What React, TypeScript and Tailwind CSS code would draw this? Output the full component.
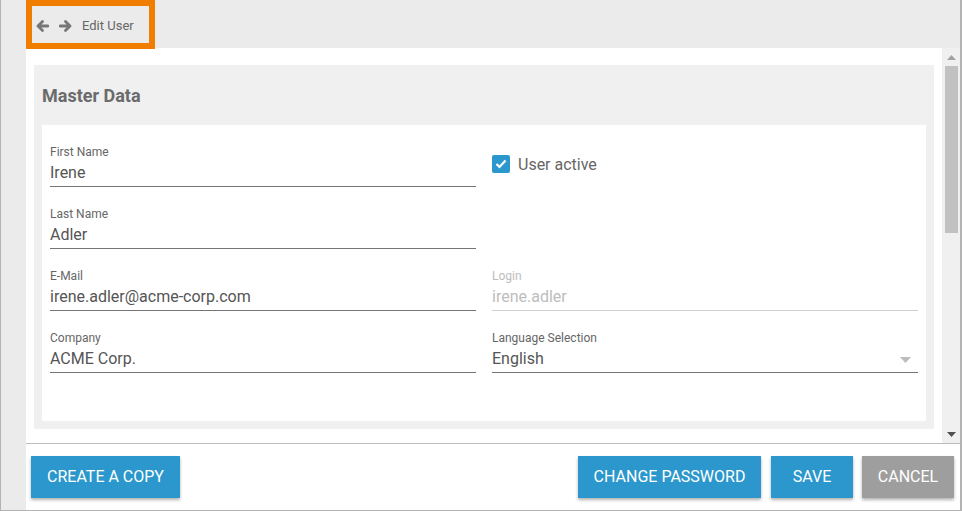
const Arrow = ({ right }: { right?: boolean }) => (
  <svg width="13" height="12" viewBox="0 0 13 12" className={right ? "scale-x-[-1]" : ""}>
    <path
      d="M12 6H2.5M6.5 1.5L2 6l4.5 4.5"
      stroke="#777"
      strokeWidth="2.8"
      fill="none"
      strokeLinecap="round"
      strokeLinejoin="round"
    />
  </svg>
);

const Field = ({
  label,
  value,
  disabled,
  select,
}: {
  label: string;
  value: string;
  disabled?: boolean;
  select?: boolean;
}) => (
  <div className="h-[62px] flex flex-col justify-end">
    <div className={`text-[12px] leading-[14px] ${disabled ? "text-[#bdbdbd]" : "text-[#666]"}`}>{label}</div>
    <div
      className={`mt-[4px] pb-[3px] flex items-center justify-between border-b text-[16px] leading-[20px] ${
        disabled ? "text-[#bdbdbd] border-[#cfcfcf]" : "text-[#555] border-[#757575]"
      }`}
    >
      <span>{value}</span>
      {select && (
        <svg width="11" height="6" viewBox="0 0 11 6" className="mr-[7px] mt-[2px]">
          <path d="M0 0h11L5.5 6z" fill="#bdbdbd" />
        </svg>
      )}
    </div>
  </div>
);

const Btn = ({ children, gray, w }: { children: string; gray?: boolean; w: string }) => (
  <button
    className={`${w} h-[42px] text-[16px] text-white uppercase shadow-[0_2px_3px_rgba(0,0,0,0.3)] ${
      gray ? "bg-[#9e9e9e]" : "bg-[#2b97cc]"
    }`}
  >
    {children}
  </button>
);

export default function App() {
  return (
    <div
      className="relative w-[962px] h-[511px] flex bg-[#ebebeb] border-l border-r-2 border-b border-[#b3b3b3] overflow-hidden"
      style={{ fontFamily: "Roboto, 'Liberation Sans', sans-serif" }}
    >
      <div className="w-[25px] shrink-0" />
      <div className="flex-1 flex flex-col">
        {/* Top bar */}
        <div className="h-[48px] flex items-center pl-[10px] pt-[3px]">
          <Arrow />
          <span className="ml-[10px] flex">
            <Arrow right />
          </span>
          <span className="ml-[10px] text-[13px] text-[#666]">Edit User</span>
        </div>

        {/* Content */}
        <div className="h-[395px] flex bg-white">
          <div className="flex-1 px-[8px] pt-[17px] overflow-hidden">
            <div className="bg-[#f0f0f0] px-[8px] pb-[8px]">
              <div className="h-[60px] flex items-center text-[18px] font-bold text-[#6b6b6b]">
                Master Data
              </div>
              <div className="bg-white px-[8px] pb-[48px] grid grid-cols-2 gap-x-[16px]">
                <Field label="First Name" value="Irene" />
                <div className="h-[62px] flex items-start pt-[30px]">
                  <div className="w-[18px] h-[18px] rounded-[2px] bg-[#2b97cc] flex items-center justify-center">
                    <svg width="12" height="10" viewBox="0 0 12 10">
                      <path d="M1.5 5l3 3 6-6.5" stroke="#fff" strokeWidth="2.2" fill="none" />
                    </svg>
                  </div>
                  <span className="ml-[8px] mt-[1px] text-[16px] leading-[18px] text-[#666]">User active</span>
                </div>
                <Field label="Last Name" value="Adler" />
                <div />
                <Field label="E-Mail" value="irene.adler@acme-corp.com" />
                <Field label="Login" value="irene.adler" disabled />
                <Field label="Company" value="ACME Corp." />
                <Field label="Language Selection" value="English" select />
              </div>
            </div>
          </div>
          {/* Scrollbar */}
          <div className="w-[18px] bg-[#f0f0f0] flex flex-col items-center">
            <svg width="9" height="5" viewBox="0 0 9 5" className="mt-[7px]">
              <path d="M4.5 0L9 5H0z" fill="#a3a3a3" />
            </svg>
            <div className="mt-[6px] w-[13px] h-[167px] bg-[#c1c1c1]" />
            <div className="flex-1" />
            <svg width="9" height="5" viewBox="0 0 9 5" className="mb-[6px]">
              <path d="M0 0h9L4.5 5z" fill="#505050" />
            </svg>
          </div>
        </div>

        {/* Footer */}
        <div className="flex-1 bg-white border-t border-[#bdbdbd] flex items-start pt-[12px] pl-[5px] pr-[6px]">
          <Btn w="w-[149px]">Create a copy</Btn>
          <div className="flex-1" />
          <Btn w="w-[183px]">Change password</Btn>
          <div className="w-[10px]" />
          <Btn w="w-[82px]">Save</Btn>
          <div className="w-[9px]" />
          <Btn w="w-[92px]" gray>
            Cancel
          </Btn>
        </div>
      </div>

      {/* Highlight overlay */}
      <div className="absolute left-[25px] top-0 w-[129px] h-[49px] border-[6px] border-[#f07d00]" />
    </div>
  );
}
